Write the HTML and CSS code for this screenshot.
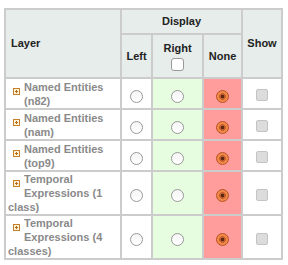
FILE: index.html
```html
<!DOCTYPE html>
<html lang="en">
<head>
    <meta charset="UTF-8">
    <title>Layers</title>
    <link rel="stylesheet" href="styles.css">
</head>
<body>
    <div class="wrap">
        <table class="layers">
            <colgroup>
                <col class="c-layer">
                <col class="c-left">
                <col class="c-right">
                <col class="c-none">
                <col class="c-show">
            </colgroup>
            <thead>
                <tr class="top">
                    <th rowspan="2" class="th-layer">Layer</th>
                    <th colspan="3">Display</th>
                    <th rowspan="2">Show</th>
                </tr>
                <tr class="sub">
                    <th>Left</th>
                    <th>Right<br><input type="checkbox" class="hcheck"></th>
                    <th>None</th>
                </tr>
            </thead>
            <tbody>
                <tr class="two">
                    <td class="name"><span class="exp"><svg width="7" height="7" viewBox="0 0 7 7"><rect x="0.5" y="0.5" width="6" height="6" fill="#fff4d8" stroke="#c9802a"/><path d="M2 3.5h3M3.5 2v3" stroke="#b86a18"/></svg></span>Named Entities (n82)</td>
                    <td class="pick"><input type="radio" name="r1" class="radio"></td>
                    <td class="pick right"><input type="radio" name="r1" class="radio"></td>
                    <td class="pick none"><input type="radio" name="r1" class="radio" checked></td>
                    <td class="pick"><input type="checkbox" class="check" disabled></td>
                </tr>
                <tr class="two">
                    <td class="name"><span class="exp"><svg width="7" height="7" viewBox="0 0 7 7"><rect x="0.5" y="0.5" width="6" height="6" fill="#fff4d8" stroke="#c9802a"/><path d="M2 3.5h3M3.5 2v3" stroke="#b86a18"/></svg></span>Named Entities (nam)</td>
                    <td class="pick"><input type="radio" name="r2" class="radio"></td>
                    <td class="pick right"><input type="radio" name="r2" class="radio"></td>
                    <td class="pick none"><input type="radio" name="r2" class="radio" checked></td>
                    <td class="pick"><input type="checkbox" class="check" disabled></td>
                </tr>
                <tr class="two">
                    <td class="name"><span class="exp"><svg width="7" height="7" viewBox="0 0 7 7"><rect x="0.5" y="0.5" width="6" height="6" fill="#fff4d8" stroke="#c9802a"/><path d="M2 3.5h3M3.5 2v3" stroke="#b86a18"/></svg></span>Named Entities (top9)</td>
                    <td class="pick"><input type="radio" name="r3" class="radio"></td>
                    <td class="pick right"><input type="radio" name="r3" class="radio"></td>
                    <td class="pick none"><input type="radio" name="r3" class="radio" checked></td>
                    <td class="pick"><input type="checkbox" class="check" disabled></td>
                </tr>
                <tr>
                    <td class="name"><span class="exp"><svg width="7" height="7" viewBox="0 0 7 7"><rect x="0.5" y="0.5" width="6" height="6" fill="#fff4d8" stroke="#c9802a"/><path d="M2 3.5h3M3.5 2v3" stroke="#b86a18"/></svg></span>Temporal Expressions (1 class)</td>
                    <td class="pick"><input type="radio" name="r4" class="radio"></td>
                    <td class="pick right"><input type="radio" name="r4" class="radio"></td>
                    <td class="pick none"><input type="radio" name="r4" class="radio" checked></td>
                    <td class="pick"><input type="checkbox" class="check" disabled></td>
                </tr>
                <tr>
                    <td class="name"><span class="exp"><svg width="7" height="7" viewBox="0 0 7 7"><rect x="0.5" y="0.5" width="6" height="6" fill="#fff4d8" stroke="#c9802a"/><path d="M2 3.5h3M3.5 2v3" stroke="#b86a18"/></svg></span>Temporal Expressions (4 classes)</td>
                    <td class="pick"><input type="radio" name="r5" class="radio"></td>
                    <td class="pick right"><input type="radio" name="r5" class="radio"></td>
                    <td class="pick none"><input type="radio" name="r5" class="radio" checked></td>
                    <td class="pick"><input type="checkbox" class="check" disabled></td>
                </tr>
            </tbody>
        </table>
    </div>
</body>
</html>
```

FILE: styles.css
```css
* {
    box-sizing: border-box;
}

body {
    margin: 0;
    background: #fff;
    font-family: "Liberation Sans", Arial, sans-serif;
    font-size: 11px;
    color: #222;
}

.wrap {
    padding: 8px 4px;
}

.layers {
    border-collapse: separate;
    border-spacing: 0;
    border: 1px solid #ccc;
    width: 277px;
    table-layout: fixed;
}

.c-layer { width: 116px; }
.c-left { width: 31px; }
.c-right { width: 51px; }
.c-none { width: 39px; }
.c-show { width: 40px; }

.layers th,
.layers td {
    border: 1px solid #ccc;
    line-height: 14px;
}

.layers th {
    background: #e6edeb;
    font-weight: bold;
    padding: 4px;
    text-align: center;
    color: #222;
}

.layers .th-layer {
    text-align: left;
    padding-left: 5px;
}

.top th {
    padding-bottom: 5px;
}

.sub th {
    height: 44px;
}

.hcheck {
    appearance: none;
    width: 13px;
    height: 13px;
    margin: 3px 0 0;
    border: 1px solid #999;
    border-radius: 3px;
    background: #fff;
    vertical-align: middle;
}

.name {
    padding: 0 2px;
    font-weight: bold;
    color: #8a8a8a;
    vertical-align: top;
}

.two {
    height: 31px;
}

.two .name {
    padding-top: 1px;
}

.exp {
    float: left;
    width: 16px;
    height: 26px;
    padding: 8px 0 0 5px;
}

.exp svg {
    display: block;
}

.pick {
    text-align: center;
    vertical-align: middle;
    padding: 0;
}

.right { background: #e6fde0; }
.none { background: #ff9c9c; }

.radio {
    appearance: none;
    width: 13px;
    height: 13px;
    margin: 5px 0 0;
    border: 1px solid #999;
    border-radius: 50%;
    background: linear-gradient(#f4f4f4, #fff);
    vertical-align: middle;
}

.radio:checked {
    border-color: #b8521f;
    background: radial-gradient(circle, #5b2a12 0 1.6px, #c8602e 2.1px 3.1px, #f0894a 3.7px);
}

.check {
    appearance: none;
    width: 12px;
    height: 12px;
    margin: 3px 0 0;
    border: 1px solid #c4c4c4;
    border-radius: 2px;
    background: #dcdcdc;
    vertical-align: middle;
}
```
